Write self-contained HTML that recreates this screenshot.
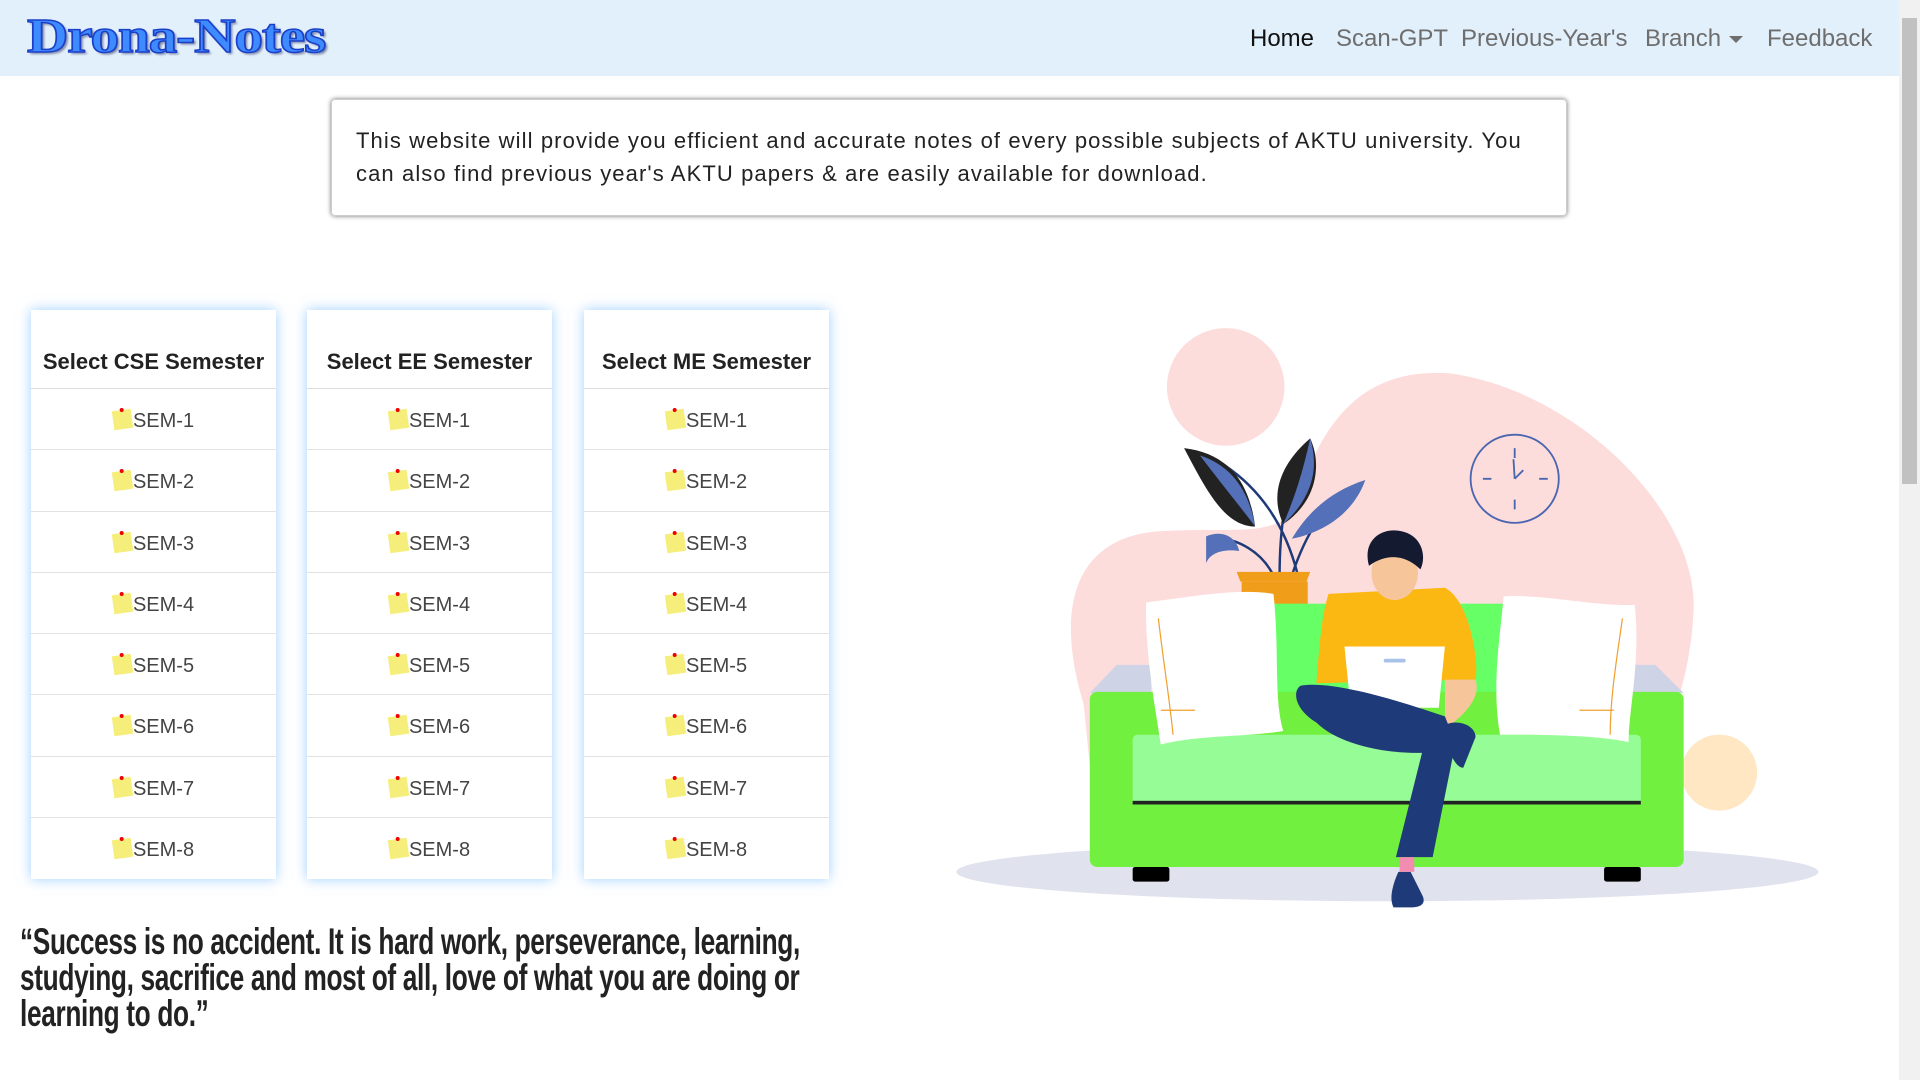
<!DOCTYPE html>
<html><head><meta charset="utf-8"><style>
*{margin:0;padding:0;box-sizing:border-box}
html,body{width:1920px;height:1080px;overflow:hidden;background:#fff;font-family:"Liberation Sans","DejaVu Sans",sans-serif}
.nav{position:absolute;left:0;top:0;width:1899px;height:76px;background:#e2f0fb}
.logo{position:absolute;left:27px;top:7px;font-family:"Liberation Serif",serif;font-weight:bold;font-size:49px;color:#3d8bff;-webkit-text-stroke:1.5px #1c3fc8;text-shadow:2px 2px 2px rgba(0,0,60,.45);letter-spacing:-1px;transform:scaleX(1.17);transform-origin:left top}
.nl{position:absolute;top:25px;font-size:24px;color:#6e6e6e;white-space:nowrap}
.caret{display:inline-block;border-left:7px solid transparent;border-right:7px solid transparent;border-top:7px solid #6e6e6e;vertical-align:middle;margin-left:8px}
.info{position:absolute;left:331px;top:99px;width:1236px;height:117px;border:1px solid #ccc;border-radius:4px;box-shadow:0 0 5px rgba(0,0,0,.55);padding:24px 24px;font-size:22px;line-height:33px;color:#222;letter-spacing:1.1px}
.card{position:absolute;top:310px;width:245px;height:569px;background:#fff;box-shadow:0 0 12px rgba(80,170,255,.55)}
.card h3{height:79px;border-bottom:1px solid #ddd;text-align:center;font-size:22px;font-weight:bold;color:#222;padding-top:39px;line-height:26px}
.row{height:61.25px;border-bottom:1px solid #e2e2e2;text-align:center;font-size:20px;color:#444;line-height:64px}
.row:last-child{border-bottom:none}
.pin{display:inline-block;width:19px;height:19px;background:#f6ee7a;transform:rotate(-8deg);position:relative;vertical-align:-2px;margin-right:1px}
.pin:after{content:"";position:absolute;left:8px;top:-2px;width:4px;height:4px;border-radius:50%;background:#e00}
.quote{position:absolute;left:20px;top:924px;font-family:"Liberation Sans Narrow","Liberation Sans",sans-serif;font-weight:bold;font-size:37px;line-height:36px;color:#222;white-space:nowrap;transform:scaleX(.71);transform-origin:left top;letter-spacing:-.5px}
.sb{position:absolute;left:1899px;top:0;width:21px;height:1080px;background:#f1f1f1}
.th{position:absolute;left:1902px;top:18px;width:15px;height:466px;background:#c1c1c1}
</style></head><body>
<div class="nav">
<div class="logo">Drona-Notes</div>
<div class="nl" style="left:1250px;color:#111">Home</div>
<div class="nl" style="left:1336px">Scan-GPT</div>
<div class="nl" style="left:1461px">Previous-Year's</div>
<div class="nl" style="left:1645px">Branch<span class="caret"></span></div>
<div class="nl" style="left:1767px">Feedback</div>
</div>
<div class="info">This website will provide you efficient and accurate notes of every possible subjects of AKTU university. You can also find previous year's AKTU papers &amp; are easily available for download.</div>

<div class="card" style="left:31px"><h3>Select CSE Semester</h3>
<div class="row"><span class="pin"></span>SEM-1</div><div class="row"><span class="pin"></span>SEM-2</div><div class="row"><span class="pin"></span>SEM-3</div><div class="row"><span class="pin"></span>SEM-4</div><div class="row"><span class="pin"></span>SEM-5</div><div class="row"><span class="pin"></span>SEM-6</div><div class="row"><span class="pin"></span>SEM-7</div><div class="row"><span class="pin"></span>SEM-8</div></div>
<div class="card" style="left:307px"><h3>Select EE Semester</h3>
<div class="row"><span class="pin"></span>SEM-1</div><div class="row"><span class="pin"></span>SEM-2</div><div class="row"><span class="pin"></span>SEM-3</div><div class="row"><span class="pin"></span>SEM-4</div><div class="row"><span class="pin"></span>SEM-5</div><div class="row"><span class="pin"></span>SEM-6</div><div class="row"><span class="pin"></span>SEM-7</div><div class="row"><span class="pin"></span>SEM-8</div></div>
<div class="card" style="left:584px"><h3>Select ME Semester</h3>
<div class="row"><span class="pin"></span>SEM-1</div><div class="row"><span class="pin"></span>SEM-2</div><div class="row"><span class="pin"></span>SEM-3</div><div class="row"><span class="pin"></span>SEM-4</div><div class="row"><span class="pin"></span>SEM-5</div><div class="row"><span class="pin"></span>SEM-6</div><div class="row"><span class="pin"></span>SEM-7</div><div class="row"><span class="pin"></span>SEM-8</div></div>

<div class="quote">“Success is no accident. It is hard work, perseverance, learning,<br>studying, sacrifice and most of all, love of what you are doing or<br>learning to do.”</div>

<svg style="position:absolute;left:0;top:0" width="1920" height="1080" viewBox="0 0 1568 882">
<ellipse cx="1133" cy="712" rx="352" ry="24" fill="#e0e3ee"/>
<circle cx="1001" cy="316" r="48" fill="#fddcdc"/>
<path d="M885 575 C862 500 875 440 945 434 C1005 430 1040 440 1058 415 C1080 335 1120 300 1185 305 C1290 320 1388 420 1383 500 C1380 560 1360 600 1350 625 L890 625 Z" fill="#fddcdc"/>
<circle cx="1404" cy="631" r="31" fill="#fee7c2"/>
<circle cx="1237" cy="391" r="36" fill="none" stroke="#4a66b0" stroke-width="1.5"/>
<path d="M1237 366v8M1237 408v8M1211 391h7M1257 391h7M1237 391l-1-16M1237 391l7-7" stroke="#4a66b0" stroke-width="1.5" fill="none"/>
<path d="M1060 470 C1050 430 1030 400 1000 380 M1045 470 C1045 430 1050 400 1062 370 M1055 470 C1065 440 1080 410 1110 395 M1040 470 C1030 450 1010 440 995 440" stroke="#1f3a78" stroke-width="2" fill="none"/>
<path d="M967 366 C1000 370 1020 390 1025 430 C1000 430 985 400 967 366Z" fill="#222"/>
<path d="M980 372 C1005 380 1020 400 1025 430 C1010 410 995 392 980 372Z" fill="#5470b8"/>
<path d="M1070 358 C1080 380 1075 410 1048 428 C1035 400 1050 375 1070 358Z" fill="#222"/>
<path d="M1070 358 C1078 385 1070 408 1048 428 C1060 400 1065 380 1070 358Z" fill="#5470b8"/>
<path d="M1115 392 C1105 420 1080 435 1055 440 C1070 415 1090 400 1115 392Z" fill="#5470b8"/>
<path d="M985 438 C1000 432 1010 440 1012 450 C998 448 988 452 985 460Z" fill="#5470b8"/>
<path d="M1010 467 h60 l-3 8 h-54Z" fill="#f09d1a"/><rect x="1014" y="475" width="54" height="20" fill="#f09d1a"/>
<rect x="1040" y="493" width="195" height="110" fill="#66ff66"/>
<path d="M890 566 L912 543 H940 V566Z M1375 566 L1352 543 H1325 V566Z" fill="#cfd3e6"/>
<rect x="890" y="565" width="485" height="143" rx="6" fill="#72f040"/>
<rect x="925" y="600" width="415" height="57" rx="4" fill="#96fc96"/>
<rect x="925" y="654" width="415" height="3" fill="#222"/>
<rect x="925" y="708" width="30" height="12" rx="2" fill="#000"/><rect x="1310" y="708" width="30" height="12" rx="2" fill="#000"/>
<path d="M936 492 C970 488 1010 480 1040 485 C1045 530 1040 570 1048 597 C1020 602 980 600 948 608 C942 570 935 530 936 492Z" fill="#fff"/>
<path d="M1228 487 C1260 485 1300 495 1335 494 C1340 540 1330 580 1330 606 C1300 600 1260 600 1225 600 C1218 560 1225 520 1228 487Z" fill="#fff"/>
<path d="M946 505 C950 540 955 570 958 600 M948 580 h28" stroke="#f0a030" fill="none"/>
<path d="M1325 505 C1320 540 1315 570 1315 600 M1290 580 h28" stroke="#f0a030" fill="none"/>
<path d="M1085 485 L1180 480 C1200 490 1208 540 1205 555 L1075 558 C1078 520 1080 500 1085 485Z" fill="#fbb812"/>
<path d="M1180 555 h25 c5 15 -10 30 -25 40Z" fill="#f6c69a"/>
<ellipse cx="1139" cy="468" rx="19" ry="22" fill="#f6c69a"/>
<path d="M1118 462 C1112 440 1130 430 1145 434 C1162 438 1165 455 1160 465 C1150 455 1135 450 1118 462Z" fill="#141a30"/>
<path d="M1098 528 h82 l-5 50 h-72Z" fill="#fff"/><rect x="1130" y="538" width="18" height="3" rx="1.5" fill="#a9c3e8"/>
<path d="M1062 560 C1090 555 1150 575 1180 585 L1190 610 C1165 620 1100 615 1075 590 C1058 580 1055 565 1062 560Z" fill="#1f3a78"/>
<path d="M1165 600 L1190 600 L1170 700 L1140 700Z" fill="#1f3a78"/>
<path d="M1180 592 c10 -5 25 0 25 10 l-10 25 c-8 0 -15 -20 -15 -35Z" fill="#1f3a78"/>
<path d="M1142 712 l10 0 l10 20 c3 8 -5 9 -10 9 h-14 c-4 -8 0 -20 4 -29Z" fill="#1f3a78"/>
<rect x="1143" y="700" width="12" height="12" fill="#f28cb0"/>
</svg>
<div class="sb"></div><div class="th"></div>
</body></html>
